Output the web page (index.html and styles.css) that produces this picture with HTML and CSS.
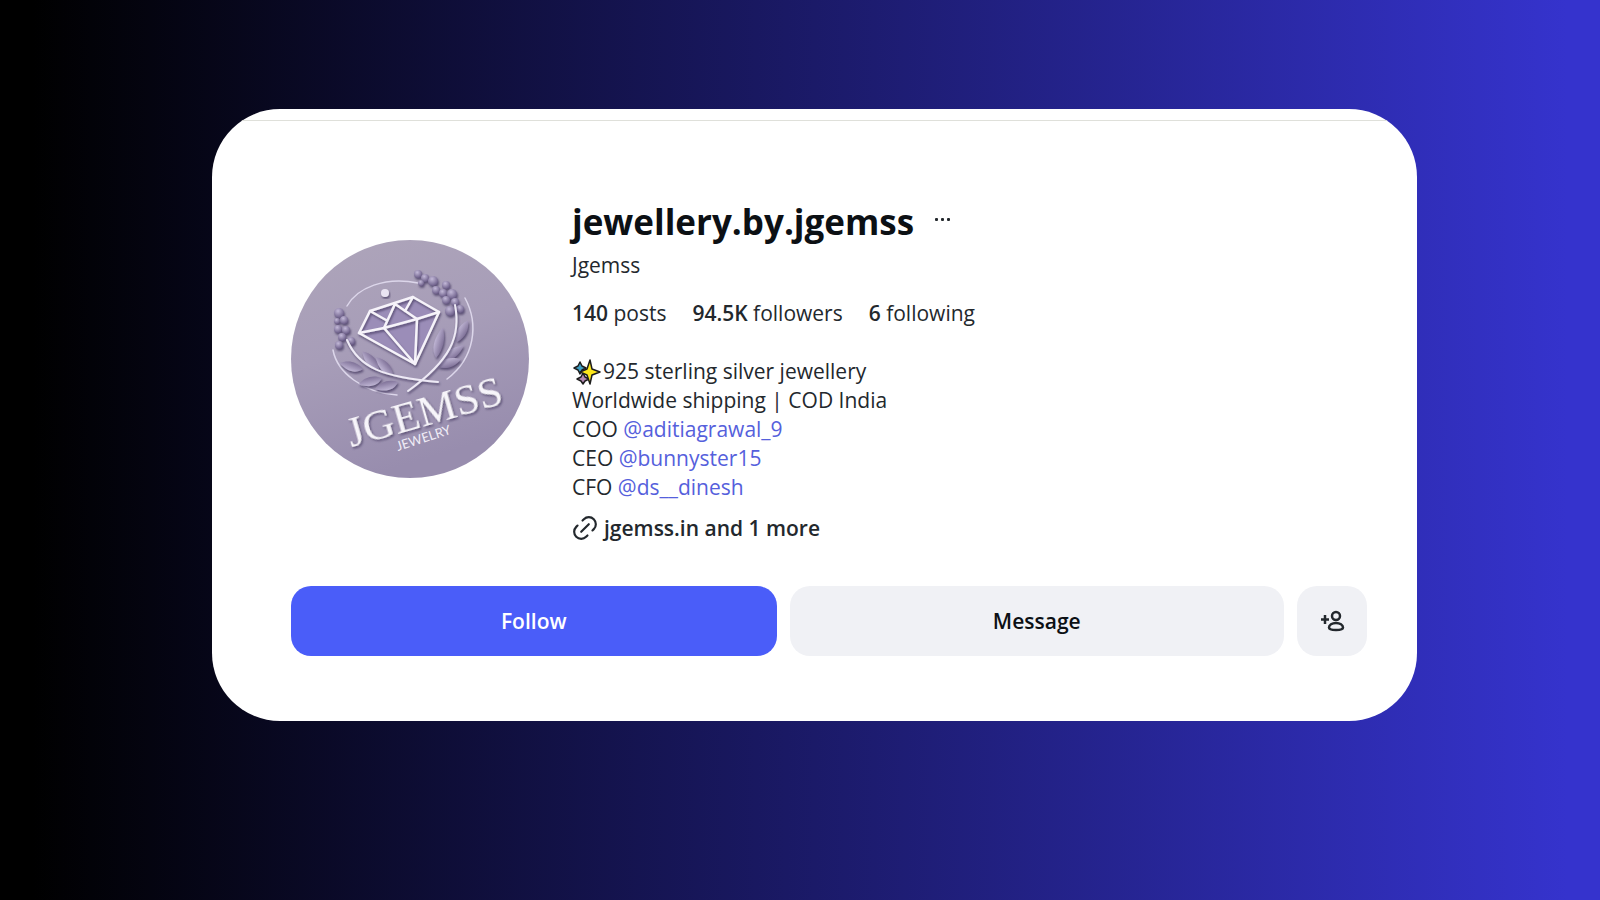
FILE: index.html
```html
<!DOCTYPE html>
<html lang="en">
<head>
    <meta charset="UTF-8">
    <meta name="viewport" content="width=device-width, initial-scale=1.0">
    <title>jewellery.by.jgemss</title>
    <link rel="stylesheet" href="styles.css">
</head>
<body>
    <main class="card">
        <hr class="divider">

        <section class="profile">
            <svg class="avatar" viewBox="0 0 238 238" role="img" aria-label="Jgemss logo">
                <defs>
                    <linearGradient id="bg" x1="0" y1="0" x2="0.3" y2="1">
                        <stop offset="0" stop-color="#aea5ba"/>
                        <stop offset="0.5" stop-color="#a79db8"/>
                        <stop offset="1" stop-color="#988dae"/>
                    </linearGradient>
                    <linearGradient id="leafFill" x1="0" y1="0" x2="0" y2="1">
                        <stop offset="0" stop-color="#bfb5d4"/>
                        <stop offset="1" stop-color="#7f7198"/>
                    </linearGradient>
                    <radialGradient id="bud" cx="0.4" cy="0.3" r="0.7">
                        <stop offset="0" stop-color="#c3b9d8"/>
                        <stop offset="1" stop-color="#6b5d88"/>
                    </radialGradient>
                    <filter id="emboss" x="-20%" y="-20%" width="140%" height="140%">
                        <feDropShadow dx="1" dy="2" stdDeviation="1" flood-color="#4a3f66" flood-opacity="0.8"/>
                    </filter>
                    <path id="leaf" d="M0 0C5-7 14-8 24-2C17 4 8 5 0 0Z"/>
                </defs>
                <circle cx="119" cy="119" r="119" fill="url(#bg)"/>

                <!-- ring -->
                <g fill="none" stroke="#dcd6ea" stroke-width="1.5" stroke-linecap="round">
                    <path d="M56 66C66 48 94 36 127 43"/>
                    <path d="M174 58C188 84 184 118 156 139"/>
                    <path d="M42 110C46 132 72 153 106 155"/>
                </g>

                <!-- leaves -->
                <g fill="url(#leafFill)" filter="url(#emboss)">
                    <use href="#leaf" transform="translate(72 129) rotate(199)"/>
                    <use href="#leaf" transform="translate(88 129) rotate(231)"/>
                    <use href="#leaf" transform="translate(102 134) rotate(229)"/>
                    <use href="#leaf" transform="translate(91 138) rotate(170)"/>
                    <use href="#leaf" transform="translate(107 142) rotate(168)"/>
                    <use href="#leaf" transform="translate(145 118) rotate(-74) scale(1.3 1)"/>
                    <use href="#leaf" transform="translate(150 123) rotate(-34) scale(1.2 1)"/>
                    <use href="#leaf" transform="translate(147 127) rotate(-14)"/>
                    <use href="#leaf" transform="translate(166 102) rotate(-58)"/>
                </g>

                <!-- lavender buds -->
                <g fill="url(#bud)" filter="url(#emboss)">
                    <circle cx="127" cy="34" r="4"/><circle cx="134" cy="38" r="4"/>
                    <circle cx="130" cy="43" r="3"/><circle cx="142" cy="41" r="5"/>
                    <circle cx="145" cy="50" r="4"/><circle cx="155" cy="45" r="4"/>
                    <circle cx="152" cy="53" r="4"/><circle cx="161" cy="54" r="5"/>
                    <circle cx="155" cy="60" r="4"/><circle cx="164" cy="62" r="4"/>
                    <circle cx="169" cy="69" r="4"/><circle cx="159" cy="71" r="5"/>
                    <circle cx="48" cy="73" r="5"/><circle cx="53" cy="80" r="4"/>
                    <circle cx="46" cy="81" r="3"/><circle cx="47" cy="89" r="4"/>
                    <circle cx="55" cy="90" r="4"/><circle cx="51" cy="97" r="4"/>
                    <circle cx="48" cy="105" r="4"/><circle cx="60" cy="101" r="4"/>
                </g>

                <!-- stems -->
                <g fill="none" stroke="#eeeaf6" stroke-width="2" stroke-linecap="round" filter="url(#emboss)">
                    <path d="M164 65C170 96 160 120 117 151"/>
                    <path d="M56 100C68 128 92 137 147 142"/>
                </g>

                <!-- diamond -->
                <path d="M79 71L122 57L148 72L124 124L68 93Z" fill="#9b8db8"/>
                <g fill="none" stroke="#f6f3fa" stroke-width="2.5" stroke-linejoin="round" stroke-linecap="round" filter="url(#emboss)">
                    <path d="M79 71L122 57L148 72L124 124L68 93Z"/>
                    <path d="M68 93L93 88L126 79L148 72"/>
                    <path d="M79 71L95 80M93 88L104 64L126 79M122 57L114 71"/>
                    <path d="M93 88L124 124L126 79"/>
                </g>
                <circle cx="94" cy="53" r="4" fill="#e9e4f2" filter="url(#emboss)"/>

                <g transform="rotate(-16 58 207)" filter="url(#emboss)">
                    <text class="logo-name" x="60" y="208">JGEMSS</text>
                </g>
                <text class="logo-sub" x="107" y="211" transform="rotate(-18 107 211)">JEWELRY</text>
            </svg>

            <div class="info">
                <div class="heading">
                    <h1 class="username">jewellery.by.jgemss</h1>
                    <button class="more" type="button" aria-label="Options">
                        <svg width="18" height="8" viewBox="0 0 18 8" fill="#23282d">
                            <rect x="1" y="0" width="3" height="3" rx="1"/>
                            <rect x="7" y="0" width="3" height="3" rx="1"/>
                            <rect x="13" y="0" width="3" height="3" rx="1"/>
                        </svg>
                    </button>
                </div>
                <p class="name">Jgemss</p>
                <ul class="stats">
                    <li><strong>140</strong> posts</li>
                    <li><strong>94.5K</strong> followers</li>
                    <li><strong>6</strong> following</li>
                </ul>
                <div class="bio">
                    <p class="tagline">
                        <svg class="sparkles" width="31" height="26" viewBox="0 0 31 26" stroke="#1d1d1d" stroke-width="1.5" stroke-linejoin="round" aria-hidden="true">
                            <path d="M8 3L10 7L14 9L10 11L8 15L6 11L2 9L6 7Z" fill="#3f9fc4"/>
                            <path d="M11 14L13 18L17 20L13 22L11 25L9 22L5 20L9 18Z" fill="#b78bb5"/>
                            <path d="M18 1L20 10L28 13L20 16L18 25L15 16L8 13L15 10Z" fill="#ffe81a"/>
                        </svg>925 sterling silver jewellery
                    </p>
                    <p>Worldwide shipping | COD India</p>
                    <p>COO <a href="#">@aditiagrawal_9</a></p>
                    <p>CEO <a href="#">@bunnyster15</a></p>
                    <p>CFO <a href="#">@ds__dinesh</a></p>
                </div>
                <a class="website" href="#">
                    <svg width="26" height="26" viewBox="0 0 24 24" fill="none" stroke="#23282d" stroke-width="2" stroke-linecap="round" aria-hidden="true">
                        <path d="M9.726 5.123L10.954 3.895A6.470 6.470 0 0 1 20.104 13.047L18.877 14.274"/>
                        <path d="M14.274 18.877L13.046 20.105A6.470 6.470 0 0 1 3.896 10.953L5.123 9.726"/>
                        <path d="M8.500 15.500L15.500 8.500"/>
                    </svg>
                    jgemss.in and 1 more
                </a>
            </div>
        </section>

        <div class="actions">
            <button class="btn btn-primary" type="button">Follow</button>
            <button class="btn" type="button">Message</button>
            <button class="btn" type="button" aria-label="Similar accounts">
                <svg width="26" height="22" viewBox="0 0 26 22" fill="none" stroke="#23282d" stroke-width="2.5">
                    <circle cx="17" cy="6" r="4"/>
                    <path d="M17 13C21 13 24 15 24 17.500C24 19.500 22 20 17 20C12 20 10 19.500 10 17.500C10 15 13 13 17 13Z"/>
                    <path d="M6 5V14M2 9.500H10"/>
                </svg>
            </button>
        </div>
    </main>
</body>
</html>
```
FILE: styles.css
```css
* {
    box-sizing: border-box;
}
body {
    margin: 0;
    min-height: 100vh;
    padding: 109px 183px 60px 212px;
    background: linear-gradient(90deg, #000 2%, #3533cd 98%);
    font-family: "Open Sans", "Noto Sans", sans-serif;
    font-size: 21px;
    line-height: 28px;
    color: #23282d;
}
h1, p, ul {
    margin: 0;
    padding: 0;
}
a {
    color: #5560dc;
    text-decoration: none;
}
button {
    border: none;
    font: inherit;
    color: inherit;
    cursor: pointer;
}
.card {
    background-color: #fff;
    border-radius: 68px;
    padding: 11px 0 65px;
    overflow: hidden;
}
.divider {
    margin: 0;
    border: none;
    border-top: 1px solid #dfe0da;
}
.profile {
    display: flex;
    align-items: flex-start;
    gap: 43px;
    padding: 75px 50px 0 79px;
}
.avatar {
    flex: none;
    width: 238px;
    height: 238px;
    margin-top: 44px;
}
.logo-name {
    font-family: "Liberation Serif", serif;
    font-size: 43px;
    fill: #f7f5fa;
}
.logo-sub {
    font-family: Lato, sans-serif;
    font-size: 13px;
    fill: #f0ecf6;
}
.heading {
    display: flex;
    align-items: center;
    gap: 20px;
}
.username {
    font-size: 35px;
    line-height: 52px;
    color: #0c1014;
}
.more {
    display: flex;
    padding: 0;
    background: none;
}
.name {
    margin-top: 3px;
}
.stats {
    display: flex;
    gap: 26px;
    margin-top: 20px;
    list-style: none;
}
.stats strong {
    font-weight: 600;
}
.bio {
    margin-top: 30px;
    line-height: 29px;
}
.tagline {
    display: flex;
    align-items: center;
}
.website {
    display: flex;
    align-items: center;
    gap: 6px;
    margin-top: 12px;
    color: #23282d;
    font-weight: 600;
}
.actions {
    display: grid;
    grid-template-columns: 486fr 495fr 70px;
    gap: 13px;
    padding: 44px 50px 0 79px;
}
.btn {
    display: flex;
    align-items: center;
    justify-content: center;
    height: 70px;
    padding: 0;
    border-radius: 20px;
    background-color: #f0f1f5;
    color: #0c1014;
    font-weight: 600;
}
.btn-primary {
    background-color: #4a5df9;
    color: #fff;
}
```
